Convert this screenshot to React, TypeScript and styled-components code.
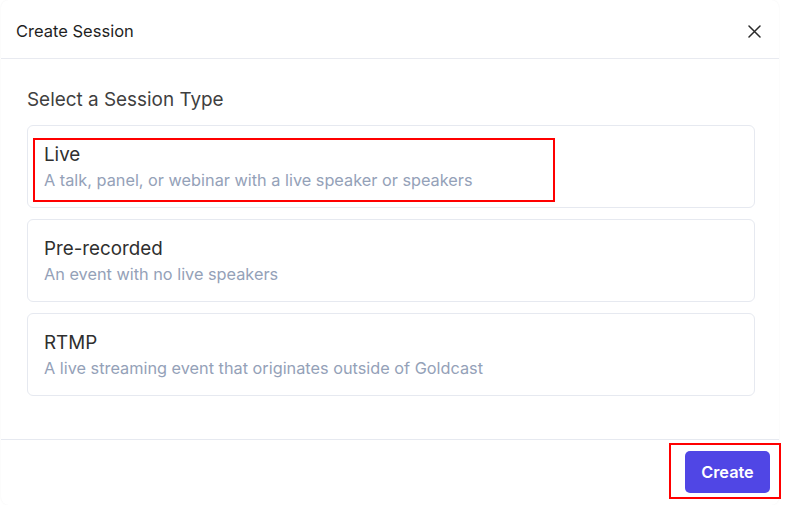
import React from "react";
import styled, { createGlobalStyle } from "styled-components";

const Global = createGlobalStyle`
  html, body { margin: 0; padding: 0; background: #ffffff; }
  body { font-family: Inter, "Noto Sans", "Liberation Sans", sans-serif; -webkit-font-smoothing: antialiased; }
  * { box-sizing: border-box; }
`;

const Dialog = styled.div`
  width: 778px;
  height: 505px;
  margin-left: 1px;
  background: #fff;
  border-radius: 8px;
  box-shadow: 0 0 2px rgba(15, 23, 42, 0.06);
  display: flex;
  flex-direction: column;
`;

const Header = styled.div`
  height: 59px;
  display: flex;
  align-items: center;
  justify-content: space-between;
  padding: 4px 17px 0 15px;
  border-bottom: 1px solid #e8eaf0;
`;

const Title = styled.h2`
  margin: 0;
  font-size: 16.5px;
  font-weight: 400;
  color: #1f1f1f;
  line-height: 24px;
`;

const CloseButton = styled.button`
  border: 0;
  background: transparent;
  padding: 0;
  width: 16px;
  height: 16px;
  display: flex;
  align-items: center;
  justify-content: center;
  color: #2a2a2a;
  cursor: pointer;
`;

const Body = styled.div`
  flex: 1;
  padding: 27px 24px 0 26px;
`;

const SectionHeading = styled.h3`
  margin: 0 0 11px;
  font-size: 18.9px;
  font-weight: 400;
  line-height: 28px;
  color: #3f3f3f;
`;

const OptionList = styled.div`
  display: flex;
  flex-direction: column;
  gap: 11px;
`;

const OptionCard = styled.div`
  position: relative;
  height: 83px;
  border: 1px solid #e6e9f0;
  border-radius: 6px;
  padding: 16px 16px 15px;
  display: flex;
  flex-direction: column;
`;

const OptionTitle = styled.div`
  font-size: 18.8px;
  line-height: 26px;
  color: #2f2f2f;
`;

const OptionDesc = styled.div`
  font-size: 16.3px;
  line-height: 24px;
  color: #94a1b8;
`;

const Highlight = styled.div<{ $l: number; $t: number; $w: number; $h: number }>`
  position: absolute;
  left: ${(p) => p.$l}px;
  top: ${(p) => p.$t}px;
  width: ${(p) => p.$w}px;
  height: ${(p) => p.$h}px;
  border: 2px solid #ff0000;
  pointer-events: none;
`;

const Footer = styled.div`
  height: 66px;
  border-top: 1px solid #e6e9f0;
  display: flex;
  justify-content: flex-end;
  align-items: flex-start;
  padding: 11px 9px 0 0;
`;

const PrimaryButton = styled.button`
  position: relative;
  width: 85px;
  height: 42px;
  border: 0;
  border-radius: 5px;
  background: #5046e5;
  color: #fff;
  font-family: inherit;
  font-size: 16.3px;
  font-weight: 600;
  cursor: pointer;
`;

const options = [
  { title: "Live", desc: "A talk, panel, or webinar with a live speaker or speakers", highlight: true },
  { title: "Pre-recorded", desc: "An event with no live speakers", highlight: false },
  { title: "RTMP", desc: "A live streaming event that originates outside of Goldcast", highlight: false },
];

export default function App() {
  return (
    <>
      <Global />
      <Dialog>
        <Header>
          <Title>Create Session</Title>
          <CloseButton aria-label="Close">
            <svg width="13" height="13" viewBox="0 0 13 13" fill="none">
              <path d="M1 1L12 12M12 1L1 12" stroke="currentColor" strokeWidth="1.5" strokeLinecap="round" />
            </svg>
          </CloseButton>
        </Header>
        <Body>
          <SectionHeading>Select a Session Type</SectionHeading>
          <OptionList>
            {options.map((o) => (
              <OptionCard key={o.title}>
                <OptionTitle>{o.title}</OptionTitle>
                <OptionDesc>{o.desc}</OptionDesc>
                {o.highlight && <Highlight $l={5} $t={12} $w={522} $h={64} />}
              </OptionCard>
            ))}
          </OptionList>
        </Body>
        <Footer>
          <PrimaryButton>
            Create
            <Highlight $l={-16} $t={-8} $w={112} $h={56} />
          </PrimaryButton>
        </Footer>
      </Dialog>
    </>
  );
}
